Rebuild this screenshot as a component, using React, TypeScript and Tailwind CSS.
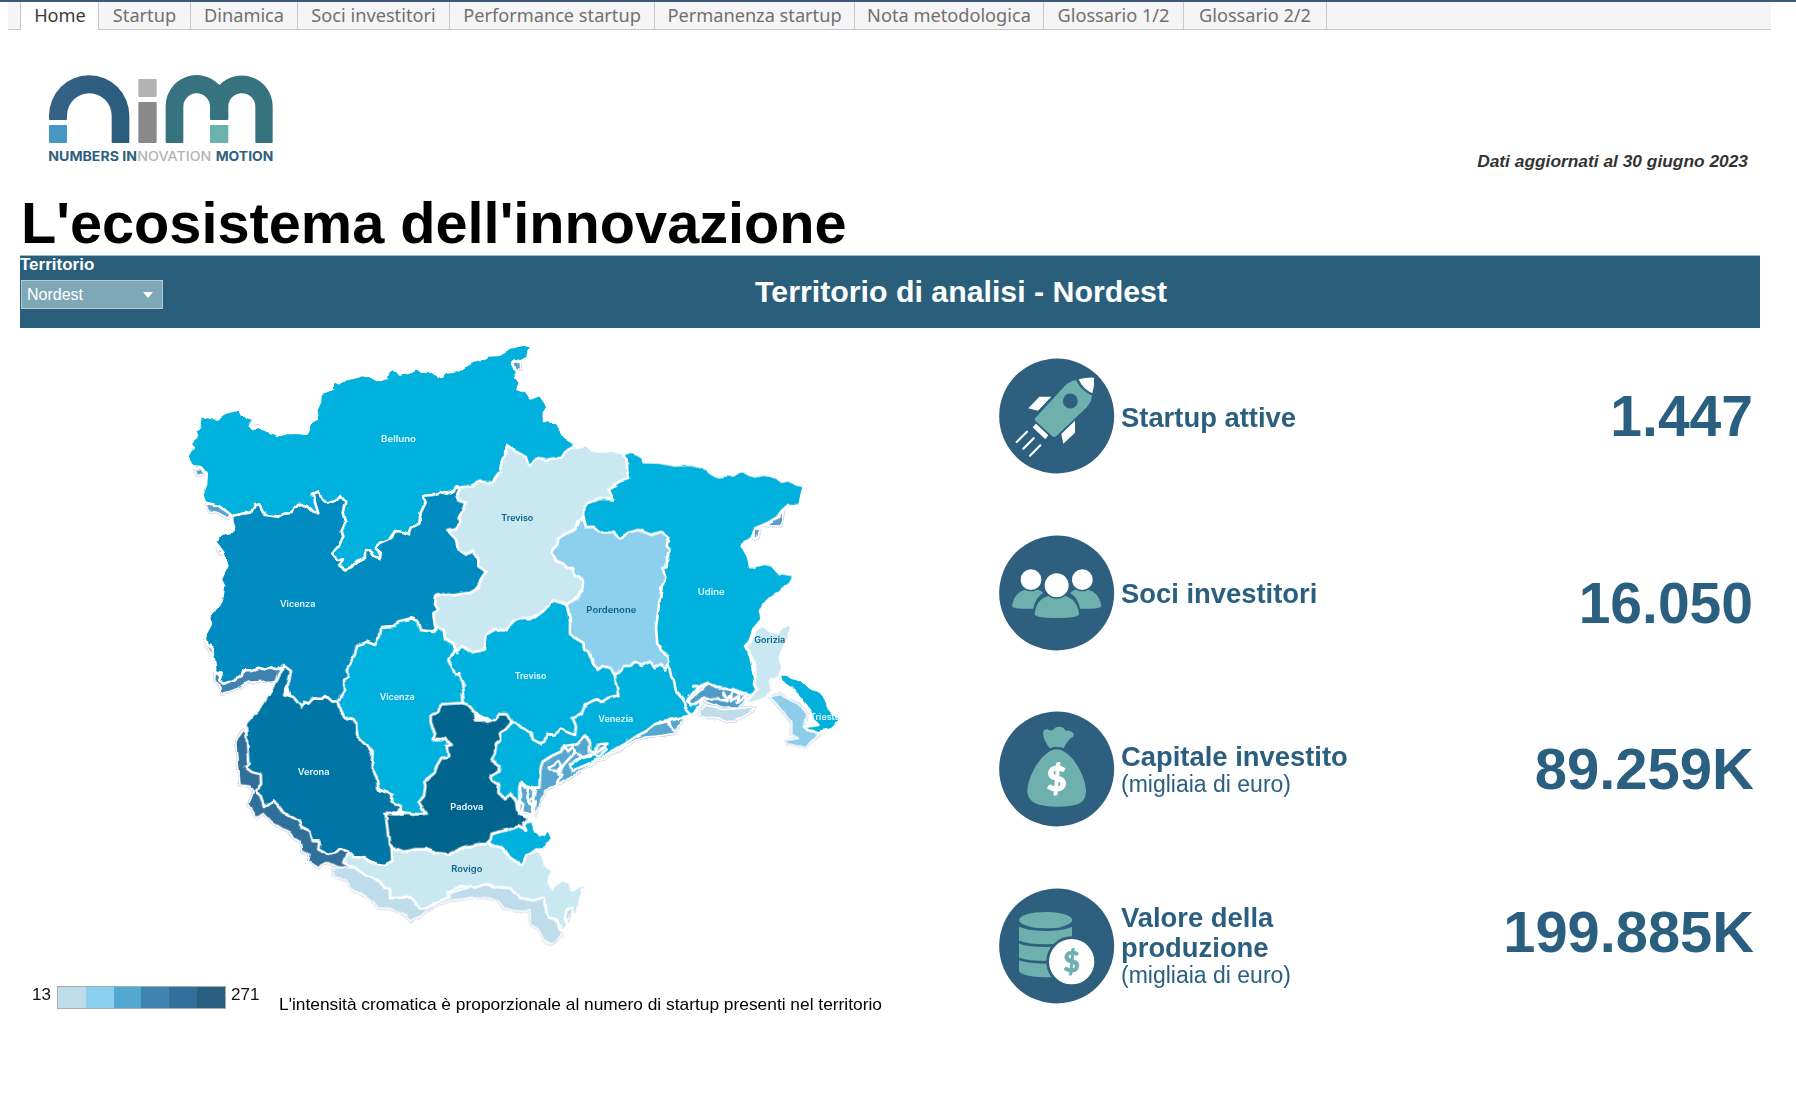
import React from "react";

const CYAN = "#00b1dd";
const PALE = "#c9e8f2";

const tabs = [
  { label: "Startup", width: "w-[92px]" },
  { label: "Dinamica", width: "w-[107px]" },
  { label: "Soci investitori", width: "w-[152px]" },
  { label: "Performance startup", width: "w-[205px]" },
  { label: "Permanenza startup", width: "w-[200px]" },
  { label: "Nota metodologica", width: "w-[189px]" },
  { label: "Glossario 1/2", width: "w-[140px]" },
  { label: "Glossario 2/2", width: "w-[143px]" },
];

function Tabs() {
  return (
    <nav className="ml-2 flex h-[28px] w-[1763px] bg-[#f5f5f5] font-['Noto_Sans',sans-serif] text-[18.2px] leading-[26px] text-[#707070]">
      <div className="w-[13px] border-r border-b border-[#c8c8c8]" />
      <div className="w-[77px] bg-white pl-px text-center text-[#3a3a3a]">Home</div>
      <div className="flex border-l border-[#c8c8c8]">
        {tabs.map((t) => (
          <div key={t.label} className={`${t.width} border-r border-b border-[#c8c8c8] text-center whitespace-nowrap`}>
            {t.label}
          </div>
        ))}
      </div>
      <div className="flex-1 border-b border-[#c8c8c8]" />
    </nav>
  );
}

function Logo() {
  return (
    <svg width="230" height="96" viewBox="54 39 690 288">
      <defs>
        <linearGradient id="n" x1="0" x2="1">
          <stop offset="0" stopColor="#366285" />
          <stop offset="1" stopColor="#2a5b7d" />
        </linearGradient>
      </defs>
      <path fill="url(#n)" d="M57 174V164A120 121 0 0 1 298 164V243Q298 246 295 246H248Q245 246 245 243V164A67 67 0 0 0 111 164V174Q111 177 108 177H60Q57 177 57 174Z" />
      <rect x="57" y="192" width="54" height="54" rx="3" fill="#4697c2" />
      <rect x="325" y="54" width="55" height="54" rx="3" fill="#b3b3b3" />
      <rect x="325" y="123" width="55" height="123" rx="3" fill="#89898b" />
      <path fill="#37737f" d="M407 243V136A93 93 0 0 1 568 72A93 93 0 0 1 728 136V243Q728 246 725 246H679Q676 246 676 243V137A40 40 0 0 0 595 137V174Q595 177 592 177H543Q540 177 540 174V137A40 40 0 0 0 460 137V243Q460 246 457 246H410Q407 246 407 243Z" />
      <rect x="540" y="192" width="55" height="54" rx="3" fill="#69b3ac" />
      <g fontFamily="Inter, sans-serif" fontSize="39">
        <text x="55" y="299" fontWeight="700" fill="#2f5f80" textLength="266" lengthAdjust="spacingAndGlyphs">NUMBERS IN</text>
        <text x="322" y="299" fontWeight="500" fill="#b3b3b3" textLength="222" lengthAdjust="spacingAndGlyphs">NOVATION</text>
        <text x="557" y="299" fontWeight="700" fill="#2f5f80" textLength="173" lengthAdjust="spacingAndGlyphs">MOTION</text>
      </g>
    </svg>
  );
}

const NW = "translate(510 990)";
const NE = "translate(1260 990)";
const SW = "translate(570 1920)";
const SE = "translate(1470 1800)";

const shadows = [
  { t: NW, f: "#5a9fcb", p: "108,520 130,518 160,525 182,550 175,562 140,544 115,540" },
  { t: NW, f: "#5a9fcb", p: "75,413 92,412 104,428 82,433" },
  { t: NW, f: "#4788b5", p: "142,655 155,655 162,670 148,664" },
  { t: NW, f: "#4788b5", p: "108,915 120,922 116,940 128,955 124,970 108,940" },
  { t: NW, f: "#5a9fcb", p: "244,286 266,284 252,291" },
  { t: NE, f: "#5a9fcb", p: "280,98 300,92 302,106 290,125" },
  { t: NE, f: "#5a9fcb", p: "1092,536 1082,585 1038,584 1070,565" },
  { t: NE, f: "#5a9fcb", p: "1004,594 1020,594 1014,618 1004,625" },
  { t: SW, f: "#3f83b1", p: "75,95 74,120 92,135 95,158 120,150 150,138 170,124 210,122 245,120 262,118 285,78 160,80 100,110" },
  { t: SW, f: "#316f9b", p: "160,268 140,295 143,345 150,432 180,436 190,455 175,490 185,505 200,530 220,518 245,545 270,560 295,570 312,590 330,600 335,630 360,640 355,660 385,680 400,666 415,665 460,687 485,682 510,684 490,640 300,450 200,300" },
  { t: SW, f: "#bfdcea", p: "430,680 430,706 470,716 480,740 510,758 545,775 565,802 600,802 640,818 660,840 700,820 735,795 780,778 820,774 850,768 890,770 925,780 940,800 975,810 1020,810 1020,850 1045,865 1060,895 1085,910 1115,885 1115,860 1160,800 1060,760 900,720 700,780 520,680" },
  { t: SE, f: "#56a7cf", p: "150,480 240,400 300,400 350,420 500,370 580,350 568,372 552,398 500,405 450,410 400,438 350,468 280,505 215,545 175,562 150,600 135,642 130,600" },
  { t: SE, f: "#56a7cf", p: "92,550 130,560 128,640 88,630" },
  { t: SE, f: "#4f9cc6", p: "595,300 655,248 720,268 775,290 745,320 700,322 640,300 600,330" },
  { t: SE, f: "#bfdcea", p: "628,328 650,312 700,326 795,318 770,340 740,360 710,362 680,350 650,350 630,342" },
  { t: SE, f: "#8dcdea", p: "838,287 870,280 905,300 930,310 950,340 945,375 985,400 965,420 950,435 920,436 893,428 888,418 925,412 905,400 905,365 880,335 860,310" },
];

const provinces = [
  { t: NW, f: CYAN, p: "92,250 110,258 140,262 165,245 190,240 208,234 215,248 232,258 252,265 240,284 248,294 272,286 280,294 300,302 328,312 355,305 385,306 410,308 418,288 425,272 442,263 439,238 450,212 452,186 470,180 488,172 488,150 505,157 520,148 550,140 580,132 600,138 622,150 650,140 655,122 668,113 690,130 715,125 740,110 755,122 785,123 815,138 830,125 862,120 885,105 920,86 945,82 950,73 980,72 1000,62 1020,50 1060,40 1085,46 1075,65 1072,82 1035,92 1028,100 1042,125 1035,135 1050,155 1043,172 1068,180 1083,202 1110,191 1122,210 1131,230 1122,248 1122,270 1162,273 1172,300 1182,318 1217,340 1180,420 1010,480 870,500 860,560 700,680 540,740 300,620 187,556 150,525 105,515 97,492 108,460 110,430 92,408 63,405 52,375 68,348 62,335 82,318 75,298 88,285" },
  { t: NW, f: "#008cc1", p: "187,555 215,548 243,545 255,522 268,520 285,552 325,557 345,545 365,543 388,518 410,525 430,545 445,547 435,515 433,495 422,492 447,481 455,505 475,518 500,508 512,495 526,512 518,545 526,575 515,600 520,620 505,645 487,668 503,687 522,685 507,703 525,715 545,708 560,690 585,680 585,658 600,655 612,675 630,682 632,665 615,650 630,635 660,622 675,600 700,603 718,610 725,590 748,578 752,545 767,515 760,495 785,492 810,483 830,488 850,480 862,466 900,500 900,650 960,720 860,850 860,900 700,900 560,1050 515,1125 470,1145 400,1150 365,1115 350,1050 335,1010 318,1015 300,1009 288,1016 265,1010 245,1017 220,1018 215,1035 180,1052 160,1058 150,1050 158,1028 135,1025 135,1010 130,975 125,950 112,940 106,910 122,880 120,848 145,825 155,810 162,765 152,745 172,705 160,665 135,632 155,608 185,602 192,588 187,572" },
  { t: SW, f: PALE, p: "470,638 460,665 495,680 520,700 550,712 570,728 600,745 600,772 635,770 660,765 690,800 705,803 735,785 775,770 775,752 810,735 850,740 890,730 925,738 965,742 985,770 1030,778 1065,768 1068,810 1075,830 1100,835 1110,865 1125,870 1132,850 1125,830 1130,805 1145,800 1150,820 1162,837 1162,805 1172,785 1174,750 1197,738 1180,735 1145,748 1140,722 1110,722 1095,732 1085,745 1075,720 1085,690 1065,675 1060,650 1048,635 1000,620 900,600 600,600" },
  { t: SE, f: CYAN, p: "375,180 500,130 560,200 600,310 620,345 600,345 560,352 520,360 495,370 470,390 440,405 400,432 350,460 300,487 245,510 240,490 268,470 300,467 345,440 352,428 330,430 310,455 300,450 300,425 285,403 268,420 262,430 240,432 225,435 212,452 185,465 158,482 152,500 150,525 148,560 135,560 110,558 93,543 88,560 88,600 80,612 75,592 60,585 45,595 0,550 -20,450 30,350 100,300" },
  { t: SE, f: CYAN, p: "-160,180 -130,130 0,60 190,-20 260,40 300,100 385,185 375,222 378,250 385,283 355,290 335,303 320,295 285,310 275,340 248,352 258,375 255,402 235,395 215,383 195,400 170,400 163,422 150,427 128,415 125,395 95,380 75,362 50,370 0,360 -80,320 -100,280" },
  { t: SW, f: "#0075a6", p: "283,75 303,90 297,120 283,160 310,168 335,199 345,183 355,188 370,172 395,174 405,165 425,182 448,180 500,250 580,400 640,500 600,520 605,625 607,660 585,672 555,668 520,650 490,648 470,628 450,622 440,635 415,642 385,625 388,602 368,600 360,570 335,558 325,540 300,525 280,515 270,500 250,478 222,498 212,465 195,450 213,430 212,400 185,393 165,378 175,372 172,320 167,250 215,195 245,145 265,100" },
  { t: SW, f: CYAN, p: "445,180 465,150 462,120 475,110 470,85 495,40 500,15 515,8 530,2 555,12 570,-15 573,-42 610,-45 630,-60 662,-68 682,-60 690,-33 730,-27 740,-42 760,-35 765,-15 790,0 800,25 785,42 775,55 787,80 795,100 808,100 825,135 815,160 820,200 790,230 800,300 760,400 720,500 700,530 635,512 632,495 605,482 608,462 565,445 560,410 545,380 548,330 520,305 502,285 498,250 485,232 465,235 452,205" },
  { t: SE, f: CYAN, p: "-5,725 5,700 40,685 80,675 108,688 98,668 125,660 138,690 150,702 163,698 172,680 187,712 165,740 130,752 110,762 95,792 60,770 40,740 5,732" },
  { t: SW, f: "#00648c", p: "755,190 785,188 818,186 835,192 855,215 858,238 875,238 893,245 920,235 925,220 950,220 965,245 945,267 930,275 930,300 918,310 915,335 905,355 928,375 925,392 902,405 910,420 927,430 925,455 945,475 960,460 978,480 983,515 1020,535 1000,552 1007,568 985,556 960,565 905,578 902,595 890,608 865,610 825,618 775,640 735,635 710,625 680,625 640,632 607,618 597,608 592,560 587,518 620,520 650,515 680,520 707,518 685,485 702,465 706,435 703,420 735,395 738,378 755,350 775,347 770,315 782,312 768,290 755,297 730,297 735,280 728,262 722,240 722,222 745,215 748,200" },
  { t: NE, f: CYAN, p: "622,365 645,366 668,380 670,393 720,395 765,403 810,401 850,410 870,425 890,437 915,433 940,433 955,422 970,420 985,430 1005,436 1030,430 1070,440 1085,452 1105,448 1130,460 1152,465 1145,490 1138,524 1105,522 1085,540 1070,560 1045,575 1005,592 1003,615 965,642 975,660 985,680 990,708 1035,698 1055,703 1075,725 1122,732 1110,755 1080,780 1050,802 1030,820 1020,840 1025,865 1000,895 990,930 975,945 990,970 1000,1025 1005,1065 1012,1080 995,1095 940,1075 900,1072 865,1055 845,1063 830,1072 812,1095 800,1110 812,1125 855,1100 815,1153 795,1130 790,1105 770,1085 762,1050 753,1035 748,1010 735,990 690,965 680,900 600,900 600,700 560,640 500,600 470,540 540,450 600,380" },
  { t: NE, f: "#8dd0ee", p: "490,555 498,588 520,587 545,603 580,605 600,622 625,605 655,597 695,612 722,603 745,620 740,645 752,658 742,680 740,708 728,712 736,740 725,770 716,830 708,890 712,940 725,960 745,973 748,995 735,1015 722,1000 705,1008 690,992 665,1004 645,992 632,1004 610,1005 585,1032 568,1010 548,1005 535,1015 520,1000 510,970 492,955 490,935 450,912 450,870 440,820 420,780 380,690 380,640 470,562" },
  { t: NE, f: PALE, p: "260,342 285,360 318,378 327,403 345,388 365,382 380,387 395,383 425,380 435,363 465,347 500,345 515,358 545,362 580,360 612,368 620,385 622,420 628,443 600,450 565,475 580,505 540,503 505,515 490,540 488,562 475,570 465,592 415,622 412,640 395,665 410,690 435,700 440,710 460,712 465,735 488,745 490,775 465,805 440,820 400,808 370,840 345,858 325,862 310,860 285,870 255,898 225,895 200,910 195,955 155,965 125,945 110,962 105,938 75,925 72,900 45,885 40,850 55,835 45,820 48,795 75,790 100,793 150,785 170,775 182,745 198,722 175,705 175,685 160,660 140,668 115,655 108,625 82,597 108,592 118,575 116,560 125,545 140,515 115,508 110,495 120,470 150,465 180,452 218,455 240,420 247,385 258,370" },
  { t: SE, f: PALE, p: "815,70 840,85 860,96 880,76 903,74 895,110 882,135 870,170 874,205 866,230 840,240 842,270 830,290 795,303 765,310 778,290 802,265 792,250 797,210 785,170 768,135 788,115 800,85" },
  { t: SE, f: CYAN, p: "868,220 890,220 905,230 935,238 960,263 985,268 1008,295 1010,315 1030,338 1055,356 1025,385 985,393 955,388 942,378 985,372 962,350 957,325 930,290 905,262 875,242" },
];

/* Lagoon islands and barrier strips. */
const islets = [
  "176,500 195,490 205,480 214,495 202,510 180,508 176,500",
  "222,436 235,450 250,436 255,455 240,470 222,490 205,520 215,522 195,558",
  "262,460 280,470 300,460 325,465 350,445",
  "92,545 105,560 120,555 132,565 130,590 115,600 125,620 130,640 110,645 85,640 88,600 100,610 95,635",
  "118,560 112,590 122,612 134,600 128,650",
  "535,365 540,380 555,390",
  "700,275 712,295 725,275 722,300 745,285 740,305 765,290 775,312",
  "610,255 622,255 620,272",
  "632,295 680,292 712,300",
  "850,240 865,262 842,275",
];

const labels = [
  { x: 1143, y: 1324, w: 105, s: "Belluno" },
  { x: 840, y: 1819, w: 106, s: "Vicenza" },
  { x: 1504, y: 1559, w: 96, s: "Treviso", dark: true },
  { x: 1759, y: 1837, w: 150, s: "Pordenone", dark: true },
  { x: 2093, y: 1781, w: 81, s: "Udine" },
  { x: 2263, y: 1925, w: 93, s: "Gorizia", dark: true },
  { x: 893, y: 2321, w: 96, s: "Verona" },
  { x: 1139, y: 2096, w: 105, s: "Vicenza" },
  { x: 1544, y: 2033, w: 95, s: "Treviso" },
  { x: 1351, y: 2427, w: 99, s: "Padova" },
  { x: 1354, y: 2613, w: 93, s: "Rovigo", dark: true },
  { x: 1795, y: 2163, w: 105, s: "Venezia" },
  { x: 2430, y: 2156, w: 90, s: "Trieste" },
];

function TerritoryMap() {
  return (
    <svg className="block" width="900" height="634" viewBox="0 981 2700 1902">
      <defs>
        <filter id="coast" filterUnits="userSpaceOnUse" x="400" y="981" width="2200" height="1902" colorInterpolationFilters="sRGB">
          <feTurbulence type="fractalNoise" baseFrequency="0.04" numOctaves="1" seed="4" result="noise" />
          <feDisplacementMap in="SourceGraphic" in2="noise" scale="12" xChannelSelector="R" yChannelSelector="G" />
        </filter>
      </defs>
      <g filter="url(#coast)">
        {shadows.map((s, i) => (
          <g key={i} transform={s.t} strokeLinejoin="round">
            <polygon points={s.p} fill="none" stroke="#c3c9dc" strokeWidth="9" />
            <polygon points={s.p} fill={s.f} stroke="#fff" strokeWidth="5" />
          </g>
        ))}
        {provinces.map((s, i) => (
          <polygon key={i} transform={s.t} points={s.p} fill={s.f} stroke="#fff" strokeWidth="8" strokeLinejoin="round" />
        ))}
        <g transform={SE} fill="none" stroke="#fff" strokeWidth="8" strokeLinejoin="round" strokeLinecap="round">
          {islets.map((p) => (
            <polyline key={p} points={p} />
          ))}
        </g>
      </g>
      <g fontFamily="Inter, sans-serif" fontSize="25" fontWeight="600">
        {labels.map((l, i) => (
          <text key={i} x={l.x} y={l.y} textLength={l.w} lengthAdjust="spacingAndGlyphs" fill={l.dark ? "#0b6289" : "#e6f7fd"}>
            {l.s}
          </text>
        ))}
      </g>
    </svg>
  );
}

function Disc({ children }: { children: React.ReactNode }) {
  return (
    <svg className="shrink-0" width="116" height="116" viewBox="57 52 348 348">
      <circle cx="230" cy="226" r="172.5" fill="#2e5f7f" />
      {children}
    </svg>
  );
}

const TEAL = "#6db0ae";

function Rocket() {
  return (
    <Disc>
      <path fill={TEAL} d="M166 232L252 138Q268 121 288 118Q300 147 336 165Q334 185 318 202L229 286Q222 292 215 285L167 241Q162 236 166 232Z" />
      <circle cx="271" cy="181" r="22.5" fill="#2e5f7f" />
      <g fill="#fff">
        <path d="M296 116Q318 110 342 111Q344 136 337 158Q308 145 296 116Z" />
        <path d="M178 168H214L174 210L145 203Z" />
        <path d="M285 240V276L250 309L244 280Z" />
        <path d="M168 249L205 284L196 296L158 260Z" />
      </g>
      <path d="M141 273L110 304M161 293L130 324M181 314L150 345" stroke="#fff" strokeWidth="6.5" strokeLinecap="round" />
    </Disc>
  );
}

function People() {
  return (
    <Disc>
      <g transform="translate(0 -531)">
        <path fill={TEAL} d="M96 796Q104 746 153 745Q178 744 190 757Q165 772 160 804Q96 806 96 796Z" />
        <path fill={TEAL} d="M364 796Q356 746 307 745Q282 744 270 757Q295 772 300 804Q364 806 364 796Z" />
        <path fill={TEAL} d="M164 820Q169 763 230 762Q291 763 297 820Q297 832 230 832Q164 832 164 820Z" />
        <g fill="#fff" stroke="#2e5f7f" strokeWidth="4">
          <circle cx="153" cy="717" r="33" />
          <circle cx="307" cy="717" r="33" />
          <circle cx="230" cy="734" r="38" />
        </g>
      </g>
    </Disc>
  );
}

function MoneyBag() {
  return (
    <Disc>
      <g transform="translate(0 -9)">
        <path fill={TEAL} d="M209 173Q190 148 189 128Q190 113 203 116Q213 121 219 118Q226 107 239 108Q252 108 256 120Q266 118 275 123Q286 129 278 139Q264 146 251 173Q230 163 209 173Z" />
        <path fill={TEAL} d="M230 176C270 176 317 251 318 302C317 340 290 348 230 348C170 348 144 335 142 302C143 251 190 176 230 176Z" />
        <text x="230" y="302" textAnchor="middle" fontFamily="Lato, sans-serif" fontWeight="900" fontSize="102" fill="#fff" stroke="#fff" strokeWidth="3">$</text>
      </g>
    </Disc>
  );
}

function Coins() {
  return (
    <Disc>
      <g transform="translate(0 -538)">
        <path fill={TEAL} d="M117 706V840Q130 857 196 858Q276 856 276 840V706Z" />
        <ellipse cx="197" cy="686" rx="80" ry="24" fill={TEAL} />
        <g fill="none" stroke="#2e5f7f" strokeWidth="8">
          <path d="M114 700Q140 715 197 715Q255 715 280 700" />
          <path d="M117 752Q142 763 197 763Q240 763 276 752" />
          <path d="M117 803Q145 813 205 813" />
        </g>
        <path fill="#2e5f7f" d="M112 682L118 707H112ZM281 682L275 707H281Z" />
        <circle cx="275" cy="811" r="72" fill="#fff" stroke="#2e5f7f" strokeWidth="8" />
        <text x="275" y="841" textAnchor="middle" fontFamily="Lato, sans-serif" fontWeight="900" fontSize="86" fill={TEAL} stroke={TEAL} strokeWidth="2">$</text>
      </g>
    </Disc>
  );
}

const kpis = [
  { icon: <Rocket />, lines: ["Startup attive"], pad: "pt-[3px]", value: "1.447", shift: "pt-0 pr-px text-[57px]" },
  { icon: <People />, lines: ["Soci investitori"], pad: "pt-0.5", value: "16.050", shift: "pt-5 pr-px text-[57px]" },
  { icon: <MoneyBag />, lines: ["Capitale investito"], note: "(migliaia di euro)", pad: "pt-0", value: "89.259K", shift: "pt-0 text-[58px]" },
  { icon: <Coins />, lines: ["Valore della", "produzione"], note: "(migliaia di euro)", pad: "pt-0", value: "199.885K", shift: "pb-[28px] text-[57.8px]" },
];

function Kpis() {
  return (
    <section className="w-[755px] text-[#2a5f7f]">
      {kpis.map((k) => (
        <div key={k.value} className="flex h-[176.5px] items-center">
          {k.icon}
          <div className={`${k.pad} ml-[6px]`}>
            {k.lines.map((l) => (
              <div key={l} className="text-[27.4px] leading-[30px] font-bold whitespace-nowrap">{l}</div>
            ))}
            {k.note && <div className="text-[23px] leading-[25px]">{k.note}</div>}
          </div>
          <div className={`${k.shift} ml-auto leading-[60px] font-bold`}>{k.value}</div>
        </div>
      ))}
    </section>
  );
}

function Legend() {
  return (
    <div className="flex pl-8 text-[17px] leading-5 text-[#111]">
      <span className="w-[25px] pt-[23px]">13</span>
      <div className="mt-[24px] flex h-[23px] w-[169px] border border-[#a3aeab]">
        <div className="flex-1 bg-[#bfddea]" />
        <div className="flex-1 bg-[#8bd0ee]" />
        <div className="flex-1 bg-[#52a8d0]" />
        <div className="flex-1 bg-[#3f83b1]" />
        <div className="flex-1 bg-[#326f9b]" />
        <div className="flex-1 bg-[#295f80]" />
      </div>
      <span className="w-[48px] pt-[23px] pl-[5px]">271</span>
      <p className="pt-[32px] pl-[5px] text-[17.35px] text-black whitespace-nowrap">L'intensità cromatica è proporzionale al numero di startup presenti nel territorio</p>
    </div>
  );
}

export default function App() {
  return (
    <div className="h-[1097px] w-[1796px] overflow-hidden bg-white font-['Liberation_Sans',Arial,sans-serif]">
      <div className="h-[2px] bg-[#3e5a78]" />
      <Tabs />
      <header className="flex h-[161px] justify-between pr-12 pl-12">
        <div className="pt-[44px]"><Logo /></div>
        <p className="pt-[121px] text-[17.35px] leading-5 font-bold text-[#333] italic">Dati aggiornati al 30 giugno 2023</p>
      </header>
      <h1 className="h-[64px] pl-[21px] text-[57.7px] leading-[65px] font-bold whitespace-nowrap text-black">L'ecosistema dell'innovazione</h1>
      <div className="ml-5 grid h-[73px] w-[1740px] grid-cols-[1fr_auto_593px] border-t border-[#9db8c6] bg-[#2a5f7c] text-white">
        <div>
          <div className="text-[17px] leading-[18px] font-bold">Territorio</div>
          <div className="mt-[6px] ml-px flex h-[29px] w-[142px] items-center justify-between border border-[#b4cbd4] bg-[#7fa8b7] pr-[9px] pl-[5px] text-[16px]">
            <span>Nordest</span>
            <span className="border-x-[5px] border-t-[6px] border-x-transparent border-t-white" />
          </div>
        </div>
        <h2 className="pt-[19px] text-[30.3px] leading-[34px] font-bold">Territorio di analisi - Nordest</h2>
        <div />
      </div>
      <main className="flex">
        <div className="w-[999px]">
          <TerritoryMap />
          <Legend />
        </div>
        <Kpis />
      </main>
    </div>
  );
}
